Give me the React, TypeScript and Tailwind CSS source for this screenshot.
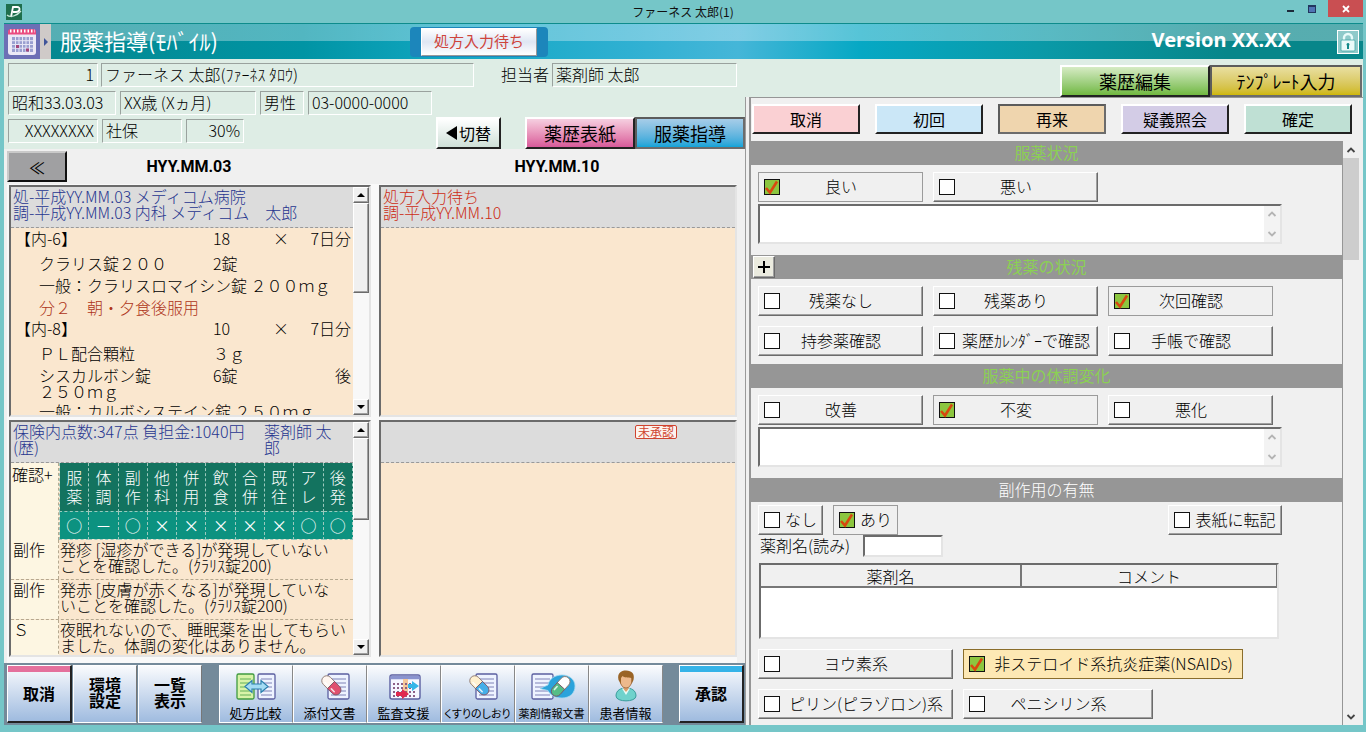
import React, { useState } from 'react';

const RAISED = 'border border-t-white border-l-white border-r-[#6b6b6b] border-b-[#6b6b6b] shadow-[inset_-1px_-1px_0_#a0a0a0]';
const RAISED_DARK = 'border-2 border-t-white border-l-white border-r-[#222] border-b-[#222]';
const PRESSED = 'border-2 border-t-[#5c5c5c] border-l-[#5c5c5c] border-r-[#6c6c6c] border-b-[#6c6c6c]';
const SUNKEN = 'border-2 border-t-[#6b6b6b] border-l-[#6b6b6b] border-r-[#e4e4e4] border-b-[#e4e4e4]';

interface FieldProps {
  children: React.ReactNode;
  className?: string;
}

const Field: React.FC<FieldProps> = ({ children, className = '' }) => (
  <div className={`h-6 shrink-0 overflow-hidden whitespace-nowrap border border-t-[#9aa29e] border-l-[#9aa29e] border-r-white border-b-white px-[3px] leading-5 ${className}`}>
    {children}
  </div>
);

interface CheckButtonProps {
  label: string;
  checked?: boolean;
  tight?: boolean;
  highlight?: boolean;
  className?: string;
}

const CheckButton: React.FC<CheckButtonProps> = ({ label, checked = false, tight = false, highlight = false, className = 'w-[165px]' }) => {
  const [on, setOn] = useState(checked);
  let frame = `${RAISED} bg-[#f0f0f0]`;
  if (on) frame = highlight ? 'border border-[#8a6d2b] bg-[#fde8b4]' : 'border border-[#9b9b9b] bg-[#f0f0f0]';
  return (
    <label className={`flex h-[30px] shrink-0 cursor-pointer items-center pl-1 ${frame} ${className}`}>
      <span className="grid size-[17px] shrink-0 place-items-center">
        <input
          type="checkbox"
          checked={on}
          onChange={() => setOn(!on)}
          className="col-start-1 row-start-1 size-4 appearance-none border border-[#111] bg-white checked:bg-[#8cc63f]"
        />
        {on && (
          <svg viewBox="0 0 17 17" className="pointer-events-none col-start-1 row-start-1 size-[17px]" fill="none">
            <path d="M3 9 L7 13.5 L14 2.500" stroke="#d9480f" strokeWidth="2.6" />
          </svg>
        )}
      </span>
      <span className={`flex-1 whitespace-nowrap pb-[3px] text-center leading-6 ${tight ? '' : 'pr-5'}`}>{label}</span>
    </label>
  );
};

const SectionHead: React.FC<{ title: string; plain?: boolean; children?: React.ReactNode }> = ({ title, plain, children }) => (
  <div className="relative h-6 bg-[#969696] text-center">
    {children}
    <h3 className={`leading-[22px] ${plain ? 'text-white' : 'font-normal text-[#8bd054]'}`}>{title}</h3>
  </div>
);

const Chevron: React.FC<{ up?: boolean; className?: string }> = ({ up, className = '' }) => (
  <svg viewBox="0 0 10 8" className={`h-2 w-[10px] ${className}`} fill="none" stroke="currentColor" strokeWidth="1.8">
    <path d={up ? 'M1.5 6 L5 2.5 L8.5 6' : 'M1.5 2 L5 5.5 L8.5 2'} />
  </svg>
);

const Memo: React.FC<{ name: string }> = ({ name }) => (
  <div className={`flex h-10 w-[524px] bg-white ${SUNKEN}`}>
    <textarea aria-label={name} className="flex-1 resize-none overflow-hidden bg-white px-1 leading-4 outline-none" />
    <div className="flex w-4 flex-col items-center justify-between bg-[#f3f3f3] py-1 text-[#b4b4b4]">
      <Chevron up />
      <Chevron />
    </div>
  </div>
);

const ClassicScroll: React.FC<{ thumb: string }> = ({ thumb }) => (
  <div className="flex w-4 shrink-0 flex-col bg-[#f8f8f8]">
    <button aria-label="上へ" className={`flex h-4 shrink-0 items-center justify-center bg-[#f0f0f0] ${RAISED}`}>
      <svg viewBox="0 0 8 4" className="h-1 w-2"><path d="M0 4 L4 0 L8 4Z" /></svg>
    </button>
    <div className={`shrink-0 bg-[#f0f0f0] ${RAISED} ${thumb}`} />
    <div className="flex-1" />
    <button aria-label="下へ" className={`flex h-4 shrink-0 items-center justify-center bg-[#f0f0f0] ${RAISED}`}>
      <svg viewBox="0 0 8 4" className="h-1 w-2"><path d="M0 0 L4 4 L8 0Z" /></svg>
    </button>
  </div>
);

const Page: React.FC<{ x: number; y?: number; w?: number; frame?: string; fill?: string }> = ({ x, y = 2, w = 21, frame = '#5b5fa0', fill = '#eef3ff' }) => (
  <g>
    <rect x={x} y={y} width={w} height="25" rx="1.5" fill={fill} stroke={frame} strokeWidth="1.3" />
    {[5, 9, 13, 17, 21].map((d) => (
      <path key={d} d={`M${x + 3} ${y + d}h${w - 6}`} stroke={frame} strokeWidth="1" opacity="0.75" />
    ))}
  </g>
);

const Capsule: React.FC<{ x: number; y: number; top: string; bottom: string; angle?: number }> = ({ x, y, top, bottom, angle = -45 }) => (
  <g transform={`translate(${x} ${y}) rotate(${angle})`}>
    <path d="M-5 1 V-6 a5 5 0 0 1 10 0 V1Z" fill={top} stroke="#8f7a72" strokeWidth="0.9" />
    <path d="M-5 0 V7 a5 5 0 0 0 10 0 V0Z" fill={bottom} stroke="#7b5566" strokeWidth="0.9" />
    <path d="M-2.5 -6 V-2 M-2.5 3 V7" stroke="#fff" strokeWidth="1.6" strokeLinecap="round" opacity="0.8" />
  </g>
);

const CompareIcon = () => (
  <svg viewBox="0 0 44 30" className="h-[30px] w-11">
    <Page x={3} w={17} frame="#3f9a3f" fill="#d8f3a8" />
    <Page x={24} w={17} />
    <path d="M11 14.500 L18 8.500 V12 H27 V8.500 L34 14.500 L27 20.500 V17 H18 V20.500Z" fill="#a4dcf4" stroke="#2b7fae" strokeWidth="1.2" />
  </svg>
);

const LabelIcon = () => (
  <svg viewBox="0 0 44 30" className="h-[30px] w-11">
    <Page x={20} />
    <Capsule x={23} y={13} top="#fff6f0" bottom="#e0506e" />
  </svg>
);

const AuditIcon = () => (
  <svg viewBox="0 0 44 30" className="h-[30px] w-11">
    <rect x="8" y="3" width="30" height="24" rx="2" fill="#f5f6ff" stroke="#5b5fa0" strokeWidth="1.4" />
    <path d="M8.5 5.500 H37.500" stroke="#8a93cf" strokeWidth="3.500" />
    <rect x="21" y="7" width="5" height="16" fill="#f6c79a" />
    <path d="M11 12h24M11 16h24M11 20h24M11 24h24" stroke="#8c5f86" strokeWidth="2" strokeDasharray="2 2" />
    <path d="M26 12 H30 V9 L37 14 L30 19 V16 H26Z" fill="#35b5e8" />
    <path d="M14 20 H20 V17 L27 22 L20 27 V24 H14Z" fill="#e0284f" />
  </svg>
);

const GuideIcon = () => (
  <svg viewBox="0 0 44 30" className="h-[30px] w-11">
    <Page x={20} />
    <Capsule x={23} y={13} top="#fff0cf" bottom="#45aee8" />
  </svg>
);

const InfoDocIcon = () => (
  <svg viewBox="0 0 48 30" className="h-[30px] w-12">
    <Page x={4} w={21} />
    <path d="M12 16.500 L20 13 C21 7 27 3 34 3 C42 3 47 8 47 14 C47 21 42 26 34 26 C27 26 22 23 20 18.500Z" fill="#2ba3db" stroke="#9fd8f0" strokeWidth="0.8" />
    <Capsule x={33} y={14} top="#fff" bottom="#55bd86" angle={42} />
  </svg>
);

const PatientIcon = () => (
  <svg viewBox="0 0 44 32" className="h-8 w-11">
    <path d="M12 26 C12 20 17 18 22 18 C27 18 32 20 32 26 C32 32.500 12 32.500 12 26Z" fill="#6fd2cc" stroke="#3b9c9c" strokeWidth="1" />
    <path d="M18 18.500 L22 25 L26 18.500Z" fill="#e9fbf8" />
    <path d="M19.5 15 H24.5 V19 L22 22 L19.5 19Z" fill="#dc9e6c" />
    <ellipse cx="22" cy="10" rx="6" ry="8" fill="#edb98c" stroke="#9a6233" strokeWidth="0.8" />
    <path d="M14.5 10 C13 3 17 0.500 22 0.500 C28 0.500 31 4 29.5 10 L27.5 14 V8 C24 7.500 20 7.500 18.500 6 L17 8 V14Z" fill="#9a6426" />
  </svg>
);

const tools = [
  { label: '処方比較', icon: <CompareIcon /> },
  { label: '添付文書', icon: <LabelIcon /> },
  { label: '監査支援', icon: <AuditIcon /> },
  { label: 'くすりのしおり', icon: <GuideIcon />, small: true },
  { label: '薬剤情報文書', icon: <InfoDocIcon />, small: true },
  { label: '患者情報', icon: <PatientIcon /> },
];

const checks = [
  { head: ['服', '薬'], mark: '○' },
  { head: ['体', '調'], mark: '－' },
  { head: ['副', '作'], mark: '○' },
  { head: ['他', '科'], mark: '×' },
  { head: ['併', '用'], mark: '×' },
  { head: ['飲', '食'], mark: '×' },
  { head: ['合', '併'], mark: '×' },
  { head: ['既', '往'], mark: '×' },
  { head: ['ア', 'レ'], mark: '○' },
  { head: ['後', '発'], mark: '○' },
];

const notes = [
  { kind: '副作', lines: ['発疹 [湿疹ができる]が発現していない', 'ことを確認した。(ｸﾗﾘｽ錠200)'] },
  { kind: '副作', lines: ['発赤 [皮膚が赤くなる]が発現していな', 'いことを確認した。(ｸﾗﾘｽ錠200)'] },
  { kind: 'Ｓ', lines: ['夜眠れないので、睡眠薬を出してもらい', 'ました。体調の変化はありません。'] },
];

const actions = [
  { label: '取消', tone: 'bg-[#fad0d3]' },
  { label: '初回', tone: 'bg-[#cbe7f7]' },
  { label: '再来', tone: 'bg-[#efd5ae]', pressed: true },
  { label: '疑義照会', tone: 'bg-[#d3cce6]' },
  { label: '確定', tone: 'bg-[#bfe0d4]' },
];

const RxHead: React.FC<{ name: string; count: string }> = ({ name, count }) => (
  <div className="mb-1 grid grid-cols-[202px_60px_1fr] leading-5">
    <span className="pl-1">{name}</span>
    <span>{count}</span>
    <span className="flex justify-between pr-0.5"><span>×</span><span>7日分</span></span>
  </div>
);

const RxDrug: React.FC<{ name: string; amount: string }> = ({ name, amount }) => (
  <div className="grid grid-cols-[202px_1fr] leading-[22px]">
    <span className="pl-7">{name}</span>
    <span>{amount}</span>
  </div>
);

const TitleBar = () => (
  <div className="flex h-[23px] shrink-0 items-center pl-[6px]">
    <div className="w-20 shrink-0">
      <svg viewBox="0 0 16 16" className="size-4">
        <rect width="16" height="16" fill="#1f6e4c" />
        <path d="M5 13 L7 3 H11 C15 3 14 8 10 8 L7 8" fill="none" stroke="#fff" strokeWidth="1.8" />
        <path d="M1 11 C4 14 11 12 15 7" fill="none" stroke="#c9e8da" strokeWidth="1.3" />
      </svg>
    </div>
    <h1 className="flex-1 text-center text-xs font-normal text-[#111]">ファーネス 太郎(1)</h1>
    <div className="flex h-full items-start">
      <button aria-label="最小化" className="flex h-[17px] w-5 items-center justify-center"><span className="mt-1 h-0.5 w-[7px] bg-[#1c2a3a]" /></button>
      <button aria-label="最大化" className="flex h-[17px] w-6 items-center justify-center"><span className="size-2 border border-t-2 border-[#22365e] bg-[#4f74b4]" /></button>
      <button aria-label="閉じる" className="ml-1 mr-[3px] flex h-[17px] w-[35px] items-center justify-center bg-[#c94f52]">
        <svg viewBox="0 0 8 8" className="size-2" stroke="#fff" strokeWidth="1.8"><path d="M1 1 L7 7 M7 1 L1 7" /></svg>
      </button>
    </div>
  </div>
);

const Banner = () => (
  <header className="flex h-9 shrink-0 items-center border-t border-[#0d8c8c] bg-[linear-gradient(to_bottom,rgba(255,255,255,0.32)_50%,transparent_50%),linear-gradient(to_right,#06868c_0%,#0094a4_22%,#14a8c4_34%,#2fb0d2_46%,#45b6d8_54%,#06a8c4_63%,#0a9aa8_76%,#07868a_90%)] text-white">
    <button aria-label="カレンダー" className="flex h-full w-9 shrink-0 items-center justify-center bg-[#6c6fb5]">
      <svg viewBox="0 0 30 28" className="h-7 w-[30px]">
        <rect x="1" y="2" width="28" height="25" rx="3" fill="#ece9f6" />
        <path d="M1 6.500 V4 a3 3 0 0 1 3-3 H26 a3 3 0 0 1 3 3 V6.500Z" fill="#ea4c80" />
        <path d="M3 3H28" stroke="#fff" strokeWidth="3" strokeDasharray="1.5 2" />
        <rect x="5" y="9" width="21" height="15" fill="#9a9fd0" />
        <path d="M5 12.7H26M5 16.5H26M5 20.2H26M8.5 9V24M12 9V24M15.5 9V24M19 9V24M22.5 9V24" stroke="#e6e6f6" strokeWidth="1" />
        <path d="M9 17h3v3h-3zM19 20.500h3v3h-3z" fill="#a2457a" />
      </svg>
    </button>
    <button aria-label="開く" className="flex h-full w-[11px] shrink-0 items-center justify-center bg-[#cfcac8]">
      <svg viewBox="0 0 4 8" className="h-2 w-1"><path d="M0 0 L4 4 L0 8Z" fill="#40559a" /></svg>
    </button>
    <h2 className="w-[359px] shrink-0 pb-1 pl-[9px] text-[22px] font-normal leading-8">服薬指導(ﾓﾊﾞｲﾙ)</h2>
    <div className="shrink-0 rounded bg-[#1c86bb] px-[11px] py-px">
      <button className="h-7 w-[116px] border border-white border-r-[#999] border-b-[#999] bg-linear-to-b from-white via-[#dfe6f3] to-white pb-0.5 text-[15px] font-normal leading-6 text-[#cf443c]">処方入力待ち</button>
    </div>
    <div className="flex flex-1 items-center justify-end pr-1">
      <span className="mr-[46px] pb-1 font-['Noto_Sans','Noto_Sans_CJK_JP',sans-serif] text-[20px] font-bold leading-8">Version XX.XX</span>
      <button aria-label="ロック" className="flex h-6 w-[22px] items-center justify-center border border-white bg-[#8fcaca]">
        <svg viewBox="0 0 16 20" className="h-5 w-4">
          <path d="M4 9 V6 a4 4 0 0 1 8 0 V9" fill="none" stroke="#e8fbfa" strokeWidth="2.4" />
          <rect x="1" y="8" width="14" height="11" rx="1" fill="#eafaf9" stroke="#3fa5a5" strokeWidth="0.8" />
          <path d="M8 11 a1.500 1.500 0 0 1 1 2.600 V17 H7 V13.600 A1.500 1.500 0 0 1 8 11Z" fill="#138a8a" />
        </svg>
      </button>
    </div>
  </header>
);

const PatientHeader = () => (
  <div className="flex h-[90px] shrink-0 flex-col gap-1 bg-[#deede5] pl-1 pt-1">
    <div className="flex gap-[3px]">
      <Field className="w-[90px] text-right">1</Field>
      <Field className="w-[373px]">ファーネス 太郎(ﾌｧｰﾈｽ ﾀﾛｳ)</Field>
      <span className="ml-6 leading-[22px]">担当者</span>
      <Field className="w-[185px]">薬剤師 太郎</Field>
    </div>
    <div className="flex gap-1">
      <Field className="w-[108px]">昭和33.03.03</Field>
      <Field className="w-[136px]">XX歳 (Xヵ月)</Field>
      <Field className="w-[44px]">男性</Field>
      <Field className="w-[124px]">03-0000-0000</Field>
    </div>
    <div className="-mt-0.5 flex h-8 gap-1">
      <Field className="mt-0.5 w-[90px] text-right">XXXXXXXX</Field>
      <Field className="mt-0.5 w-[80px]">社保</Field>
      <Field className="mt-0.5 w-[58px] text-right">30%</Field>
      <div className="flex flex-1 justify-end">
        <button className={`mr-6 h-8 w-[65px] bg-linear-to-b from-white to-[#cfe0d8] leading-6 ${RAISED_DARK}`}>
          <span className="flex items-center justify-center font-normal">
            <svg viewBox="0 0 11 14" className="mr-0.5 h-[14px] w-[11px]"><path d="M11 0 V14 L0 7Z" /></svg>切替
          </span>
        </button>
        <button className={`h-8 w-[110px] bg-linear-to-b from-[#f5cfe0] to-[#d75a9a] text-lg font-normal leading-6 ${RAISED_DARK}`}>薬歴表紙</button>
        <button className={`h-8 w-[110px] bg-linear-to-b from-[#a6cde8] to-[#0ba4d8] text-lg font-normal leading-6 ${PRESSED}`}>服薬指導</button>
      </div>
    </div>
  </div>
);

const History = () => (
  <div className="flex min-h-0 flex-1 flex-col pl-[3px] pr-2">
    <div className="grid h-[35px] shrink-0 grid-cols-[366px_1fr] items-center text-base font-bold">
      <div className="flex items-center">
        <button aria-label="前へ" className="h-[31px] w-[60px] border-2 border-t-[#c9c9c9] border-l-[#c9c9c9] border-r-[#111] border-b-[#111] bg-[#a0a0a2] text-base font-normal leading-6">≪</button>
        <span className="flex-1 pr-[62px] text-center font-['Roboto','Noto_Sans_CJK_JP',sans-serif]">HYY.MM.03</span>
      </div>
      <span className="pl-1 text-center font-['Roboto','Noto_Sans_CJK_JP',sans-serif]">HYY.MM.10</span>
    </div>

    <div className="grid min-h-0 flex-1 grid-cols-[362px_1fr] grid-rows-[232fr_237fr] gap-x-2 gap-y-[3px] bg-white/60 pl-[2px] pb-[6px] pt-px leading-4">
      <section className={`flex min-h-0 overflow-hidden bg-[#fae7cf] ${SUNKEN}`}>
        <div className="min-w-0 flex-1 overflow-hidden whitespace-nowrap">
          <div className="h-[41px] border-b border-dashed border-[#999] bg-[#dcdcdc] pl-0.5 pt-px text-[#26358f]">
            <p>処-平成YY.MM.03 メディコム病院</p>
            <p>調-平成YY.MM.03 内科 メディコム　太郎</p>
          </div>
          <RxHead name="【内-6】" count="18" />
          <RxDrug name="クラリス錠２００" amount="2錠" />
          <p className="pl-7 leading-[22px]">一般：クラリスロマイシン錠 ２００ｍｇ</p>
          <p className="pl-7 leading-[22px] text-[#ae3419]">分２　朝・夕食後服用</p>
          <RxHead name="【内-8】" count="10" />
          <RxDrug name="ＰＬ配合顆粒" amount="３ｇ" />
          <div className="grid grid-cols-[202px_1fr] pb-px pt-[3px]">
            <span className="pl-7">シスカルボン錠<br />２５０ｍｇ</span>
            <span className="flex justify-between pr-0.5"><span>6錠</span><span>後</span></span>
          </div>
          <p className="pl-7 leading-[22px]">一般：カルボシステイン錠 ２５０ｍｇ</p>
        </div>
        <ClassicScroll thumb="h-[90px]" />
      </section>

      <section className={`min-h-0 overflow-hidden bg-[#fae7cf] ${SUNKEN}`}>
        <div className="h-[41px] border-b border-dashed border-[#999] bg-[#dcdcdc] pl-0.5 pt-px text-[#cc2b14]">
          <p>処方入力待ち</p>
          <p>調-平成YY.MM.10</p>
        </div>
      </section>

      <section className={`flex min-h-0 overflow-hidden bg-[#fae7cf] ${SUNKEN}`}>
        <div className="min-w-0 flex-1 overflow-hidden whitespace-nowrap">
          <div className="grid h-[41px] grid-cols-[251px_1fr] border-b border-dashed border-[#999] bg-[#dcdcdc] pl-0.5 pt-px text-[#26358f]">
            <span>保険内点数:347点 負担金:1040円<br />(歴)</span>
            <span>薬剤師 太<br />郎</span>
          </div>
          <div className="flex">
            <div className="w-12 shrink-0 border-r border-dashed border-[#b5a88f] bg-[#fdf6e2] pl-px pt-[3px]">確認+</div>
            <table className="flex-1 table-fixed border-collapse text-center text-white">
              <thead>
                <tr className="h-12 bg-[#13735f]">
                  {checks.map((c) => (
                    <th key={c.head.join('')} className="border border-t-0 border-dashed border-[#9cc9bd] p-0 font-light leading-[19px]">
                      {c.head[0]}<br />{c.head[1]}
                    </th>
                  ))}
                </tr>
              </thead>
              <tbody>
                <tr className="h-7 bg-[#0c9280]">
                  {checks.map((c) => (
                    <td key={c.head.join('')} className="border border-dashed border-[#9cc9bd] p-0 font-normal">{c.mark}</td>
                  ))}
                </tr>
              </tbody>
            </table>
          </div>
          {notes.map((n) => (
            <div key={n.lines[0]} className="flex h-10 border-b border-dashed border-[#b5a88f]">
              <div className="w-12 shrink-0 border-r border-dashed border-[#b5a88f] bg-[#fdf6e2] pl-0.5 pt-px">{n.kind}</div>
              <p className="pl-px pt-px">{n.lines[0]}<br />{n.lines[1]}</p>
            </div>
          ))}
        </div>
        <ClassicScroll thumb="h-[82px]" />
      </section>

      <section className={`min-h-0 overflow-hidden bg-[#fae7cf] ${SUNKEN}`}>
        <div className="flex h-[41px] items-start justify-end border-b border-dashed border-[#999] bg-[#dcdcdc] pr-[58px] pt-[3px]">
          <span className="rounded-xs border border-[#cf432f] bg-[#fdf3ee] px-0.5 text-xs font-normal leading-3 text-[#cf432f]">未承認</span>
        </div>
      </section>
    </div>
  </div>
);

const BottomBar = () => (
  <nav className="flex h-[62px] shrink-0 items-stretch bg-[#748a9a] py-0.5 pl-[3px] pr-px">
    <button className="w-[65px] shrink-0 border border-white border-b-2 border-r-2 border-b-[#222] border-r-[#222] bg-linear-to-b from-[#fafbfd] to-[#9fbbdf] font-bold">
      <span className="flex h-full flex-col"><span className="h-[6px] bg-[#e4709c]" /><span className="flex flex-1 items-center justify-center pb-2">取消</span></span>
    </button>
    <button className="ml-px w-16 shrink-0 border border-white border-r-[#777] bg-linear-to-b from-[#fafbfd] to-[#9fbbdf] pb-1 font-bold leading-4">環境<br />設定</button>
    <button className="ml-px w-16 shrink-0 border border-white border-r-[#777] bg-linear-to-b from-[#fafbfd] to-[#9fbbdf] pb-1 font-bold leading-4">一覧<br />表示</button>
    <div className="flex flex-1 justify-center">
      {tools.map((t) => (
        <button key={t.label} className="flex w-[74px] flex-col items-center justify-end gap-0.5 border border-white border-r-[#888] bg-linear-to-b from-[#fafbfd] to-[#9fbbdf]">
          {t.icon}
          <span className={`whitespace-nowrap font-normal leading-[18px] ${t.small ? "text-[11px] [font-feature-settings:'palt']" : 'text-[13px]'}`}>{t.label}</span>
        </button>
      ))}
    </div>
    <button className="w-[65px] shrink-0 border border-white border-b-2 border-r-2 border-b-[#222] border-r-[#222] bg-linear-to-b from-[#fafbfd] to-[#9fbbdf] font-bold">
      <span className="flex h-full flex-col"><span className="h-[6px] bg-[#35b3e8]" /><span className="flex flex-1 items-center justify-center pb-2">承認</span></span>
    </button>
  </nav>
);

const TemplatePanel = () => (
  <div className="min-w-0 flex-1 overflow-hidden border-r border-[#969696]">
    <SectionHead title="服薬状況" />
    <div className="px-[7px] pb-[11px] pt-[7px]">
      <div className="mb-0.5 flex gap-[10px]">
        <CheckButton label="良い" checked />
        <CheckButton label="悪い" />
      </div>
      <Memo name="服薬状況メモ" />
    </div>

    <SectionHead title="残薬の状況">
      <button aria-label="追加" className={`absolute left-0.5 top-px flex size-[22px] items-center justify-center bg-[#ebebdf] ${RAISED}`}>
        <svg viewBox="0 0 12 12" className="size-3" stroke="#000" strokeWidth="2"><path d="M6 0V12M0 6H12" /></svg>
      </button>
    </SectionHead>
    <div className="flex flex-col gap-[10px] px-[7px] pb-2 pt-[7px]">
      <div className="flex gap-[10px]">
        <CheckButton label="残薬なし" />
        <CheckButton label="残薬あり" />
        <CheckButton label="次回確認" checked />
      </div>
      <div className="flex gap-[10px]">
        <CheckButton label="持参薬確認" />
        <CheckButton label="薬歴ｶﾚﾝﾀﾞｰで確認" tight />
        <CheckButton label="手帳で確認" />
      </div>
    </div>

    <SectionHead title="服薬中の体調変化" />
    <div className="px-[7px] pb-[11px] pt-[7px]">
      <div className="mb-0.5 flex gap-[10px]">
        <CheckButton label="改善" />
        <CheckButton label="不変" checked />
        <CheckButton label="悪化" />
      </div>
      <Memo name="体調変化メモ" />
    </div>

    <SectionHead title="副作用の有無" plain />
    <div className="px-[7px] pt-[3px]">
      <div className="flex w-[524px] gap-[10px]">
        <CheckButton label="なし" tight className="w-[65px]" />
        <CheckButton label="あり" checked tight className="w-[65px]" />
        <CheckButton label="表紙に転記" tight className="ml-auto w-[114px]" />
      </div>
      <div className="flex h-[22px] items-center gap-1">
        <label htmlFor="drug-name" className="w-[101px] whitespace-nowrap pb-0.5 pl-0.5 leading-5">薬剤名(読み)</label>
        <input id="drug-name" type="text" className={`h-[22px] w-20 bg-white px-1 outline-none ${SUNKEN}`} />
      </div>
      <div className={`mb-[10px] ml-px mt-[6px] h-[76px] w-[520px] bg-white ${SUNKEN}`}>
        <table className="w-full table-fixed border-collapse">
          <thead>
            <tr className="h-[22px] bg-[#f0f0f0]">
              <th className="w-[260px] border-b-2 border-r-2 border-[#777] p-0 font-light leading-5">薬剤名</th>
              <th className="border-b-2 border-r border-[#777] p-0 font-light leading-5">コメント</th>
            </tr>
          </thead>
        </table>
      </div>
      <div className="mb-[10px] flex gap-[10px]">
        <CheckButton label="ヨウ素系" className="w-[195px]" />
        <CheckButton label="非ステロイド系抗炎症薬(NSAIDs)" checked tight highlight className="w-[280px]" />
      </div>
      <div className="flex gap-[10px]">
        <CheckButton label="ピリン(ピラゾロン)系" tight className="w-[195px]" />
        <CheckButton label="ペニシリン系" className="w-[190px]" />
      </div>
    </div>
  </div>
);

const App: React.FC = () => {
  return (
    <div className="flex h-screen flex-col overflow-hidden bg-[#75c6c8] font-['Noto_Sans_CJK_JP',sans-serif] text-base font-light text-black">
      <TitleBar />
      <main className="mb-[7px] ml-1 mr-[3px] flex min-h-0 flex-1 flex-col bg-[#f0f0f0]">
        <Banner />
        <div className="grid min-h-0 flex-1 grid-cols-[741fr_618fr]">
          <div className="flex min-h-0 min-w-0 flex-col">
            <PatientHeader />
            <History />
            <BottomBar />
          </div>

          <div className="flex min-h-0 min-w-0 flex-col">
            <div className="flex h-[38px] shrink-0 items-end justify-end bg-[#deede5] pr-px">
              <button className={`h-8 w-[150px] bg-linear-to-b from-[#d6ebc4] to-[#71b83f] text-lg font-normal leading-6 ${RAISED_DARK}`}>薬歴編集</button>
              <button className={`h-8 w-[152px] bg-linear-to-b from-[#e9dfa0] to-[#cfb800] text-lg font-normal leading-6 ${PRESSED}`}>ﾃﾝﾌﾟﾚｰﾄ入力</button>
            </div>
            <div className="flex min-h-0 flex-1 border-l border-[#9a9a9a] pl-[3px]">
              <div className="flex min-w-0 flex-1 flex-col border-l-2 border-t border-[#969696]">
                <div className="flex h-[43px] shrink-0 items-start gap-[15px] pl-px pt-[6px]">
                  {actions.map((a) => (
                    <button key={a.label} className={`h-[30px] w-[108px] font-normal leading-5 ${a.tone} ${a.pressed ? PRESSED : RAISED_DARK}`}>
                      {a.label}
                    </button>
                  ))}
                </div>
                <div className="flex min-h-0 flex-1">
                  <TemplatePanel />
                  <div className="mr-1 flex w-4 shrink-0 flex-col items-center bg-[#f0f0f0] text-[#444]">
                    <button aria-label="上へスクロール" className="flex h-[17px] w-full shrink-0 items-center justify-center"><Chevron up /></button>
                    <div className="h-[102px] w-full shrink-0 bg-[#cdcdcd]" />
                    <div className="flex-1" />
                    <button aria-label="下へスクロール" className="flex h-[17px] w-full shrink-0 items-center justify-center"><Chevron /></button>
                  </div>
                </div>
              </div>
            </div>
          </div>
        </div>
      </main>
    </div>
  );
};

export default App;
